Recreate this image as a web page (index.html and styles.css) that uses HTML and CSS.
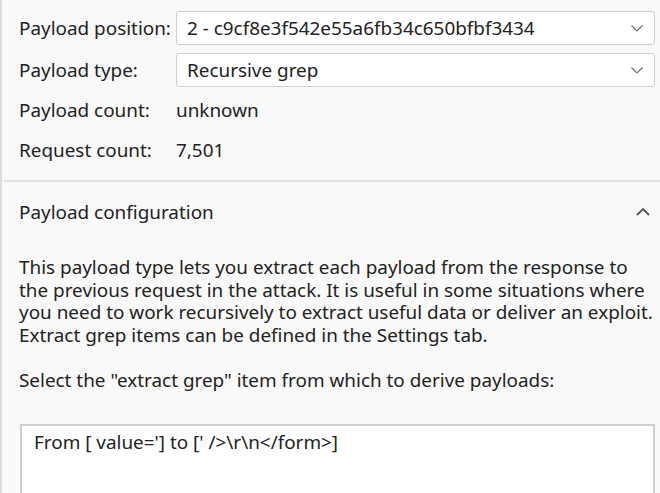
FILE: index.html
```html
<!DOCTYPE html>
<html>
<head>
<meta charset="utf-8">
<link rel="stylesheet" href="styles.css">
</head>
<body>
<div class="panel">
  <div class="fields">
    <div class="label">Payload position:</div>
    <div class="select"><span>2 - c9cf8e3f542e55a6fb34c650bfbf3434</span>
      <svg class="chev" width="12" height="7" viewBox="0 0 12 7"><path d="M0.5 0.5 L6 6 L11.5 0.5" fill="none" stroke="#707070" stroke-width="1.2"/></svg>
    </div>
    <div class="label">Payload type:</div>
    <div class="select"><span>Recursive grep</span>
      <svg class="chev" width="12" height="7" viewBox="0 0 12 7"><path d="M0.5 0.5 L6 6 L11.5 0.5" fill="none" stroke="#707070" stroke-width="1.2"/></svg>
    </div>
    <div class="label text">Payload count:</div>
    <div class="value text">unknown</div>
    <div class="label text">Request count:</div>
    <div class="value text">7,501</div>
  </div>
  <div class="sep"></div>
  <div class="config">
    <div class="config-head">
      <span>Payload configuration</span>
      <svg class="up" width="14" height="8" viewBox="0 0 14 8"><path d="M1 7 L7 1 L13 7" fill="none" stroke="#555" stroke-width="1.8"/></svg>
    </div>
    <p class="desc">This payload type lets you extract each payload from the response to<br>the previous request in the attack. It is useful in some situations where<br>you need to work recursively to extract useful data or deliver an exploit.<br>Extract grep items can be defined in the Settings tab.</p>
    <p class="prompt">Select the "extract grep" item from which to derive payloads:</p>
    <div class="list">
      <div class="item">From [ value='] to [' /&gt;\r\n&lt;/form&gt;]</div>
    </div>
  </div>
</div>
</body>
</html>
```

FILE: styles.css
```css
html, body {
  margin: 0;
  padding: 0;
  background: #f9f9f9;
  height: 100%;
  overflow: hidden;
}
body {
  font-family: "Noto Sans", "Open Sans", sans-serif;
  font-size: 18.9px;
  color: #222;
}
.panel {
  border-left: 2px solid #dcdcdc;
  height: 100%;
  box-sizing: border-box;
}
.fields {
  display: grid;
  grid-template-columns: 157px 479px;
  grid-template-rows: 34px 34px 30px 34px;
  row-gap: 8px;
  padding: 11px 0 0 17px;
  align-items: center;
}
.label {
  white-space: nowrap;
}
.select {
  height: 34px;
  box-sizing: border-box;
  border: 1px solid #cfcfcf;
  border-radius: 3px;
  background: #fff;
  display: flex;
  align-items: center;
  justify-content: space-between;
  padding: 0 11px 0 10px;
  white-space: nowrap;
}
.sep {
  margin: 13px 0 0 2px;
  height: 2px;
  background: #e0e0e0;
}
.config {
  padding: 0 5px 0 17px;
}
.config-head {
  display: flex;
  justify-content: space-between;
  align-items: center;
  height: 60px;
  padding-right: 5px;
}
.desc {
  margin: 14px 0 0 0;
  line-height: 22.5px;
  white-space: nowrap;
}
.prompt {
  margin: 23px 0 0 0;
  line-height: 22.5px;
  white-space: nowrap;
}
.list {
  margin-top: 32px;
  margin-left: 1px;
  border: 2px solid #d0d0d0;
  border-bottom: none;
  background: #fff;
  height: 80px;
}
.item {
  padding: 4px 0 0 12px;
  line-height: 24px;
}
```
